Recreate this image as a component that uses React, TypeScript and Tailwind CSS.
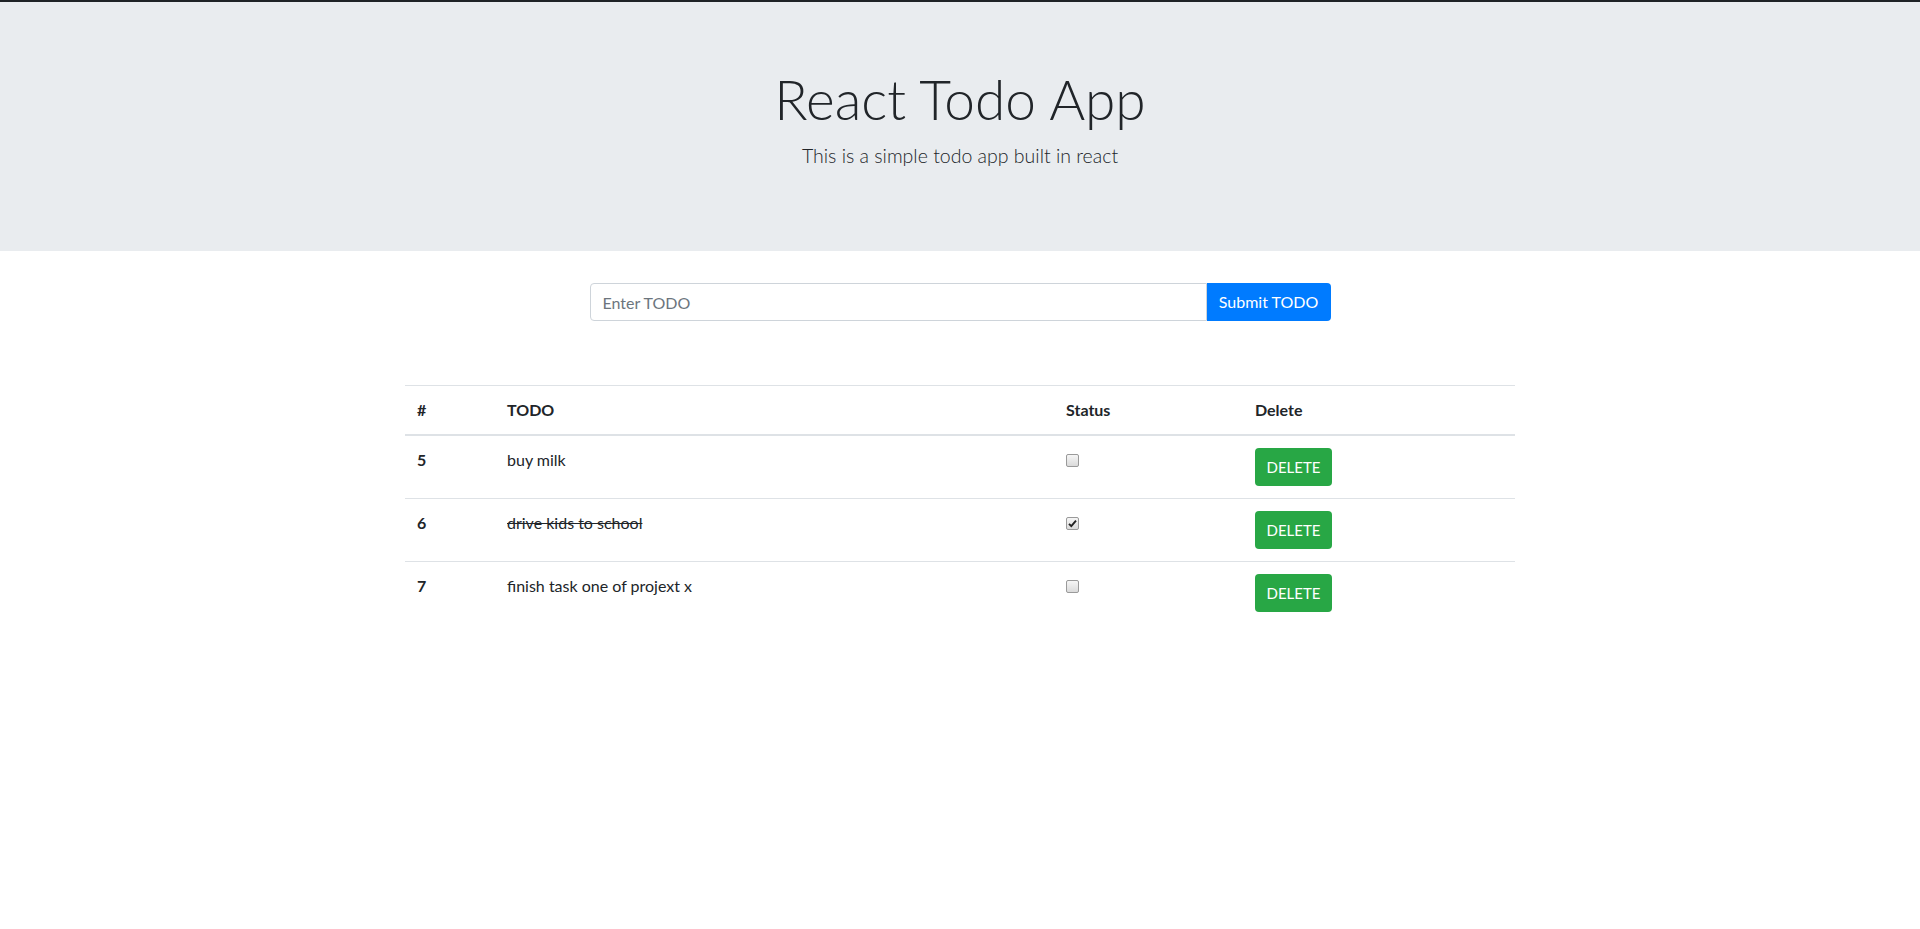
import { useState } from "react";

type Todo = {
  id: number;
  text: string;
  done: boolean;
};

const initialTodos: Todo[] = [
  { id: 5, text: "buy milk", done: false },
  { id: 6, text: "drive kids to school", done: true },
  { id: 7, text: "finish task one of projext x", done: false },
];

function StatusBox({ checked, onChange }: { checked: boolean; onChange: () => void }) {
  return (
    <span className="relative inline-block w-[13px] h-[13px] mt-[6px] align-top">
      <input
        type="checkbox"
        checked={checked}
        onChange={onChange}
        className="appearance-none block w-[13px] h-[13px] m-0 rounded-[2px] border border-[#9a9a9a] bg-gradient-to-b from-[#f6f6f6] to-[#dadada] cursor-pointer"
      />
      {checked && (
        <svg
          viewBox="0 0 13 13"
          className="pointer-events-none absolute inset-0 w-[13px] h-[13px]"
        >
          <path d="M3 6.8 L5.3 9.2 L10 3.6" fill="none" stroke="#222" strokeWidth="1.9" />
        </svg>
      )}
    </span>
  );
}

export default function App() {
  const [todos, setTodos] = useState<Todo[]>(initialTodos);
  const [draft, setDraft] = useState("");

  const addTodo = () => {
    if (!draft.trim()) return;
    const nextId = todos.length ? todos[todos.length - 1].id + 1 : 1;
    setTodos([...todos, { id: nextId, text: draft.trim(), done: false }]);
    setDraft("");
  };

  const toggle = (id: number) =>
    setTodos(todos.map((t) => (t.id === id ? { ...t, done: !t.done } : t)));

  const remove = (id: number) => setTodos(todos.filter((t) => t.id !== id));

  return (
    <div className="min-h-[929px] bg-white text-[#212529] font-['Lato','Liberation_Sans',sans-serif] text-base">
      <div className="h-[2px] bg-[#1f2326]" />

      {/* Header */}
      <div className="bg-[#e9ecef] py-16 px-8 mb-8 text-center">
        <h1 className="text-[55px] leading-[67px] font-light mb-2">React Todo App</h1>
        <p className="text-[19.5px] leading-[30px] font-light mb-4">
          This is a simple todo app built in react
        </p>
      </div>

      {/* Form */}
      <div className="flex justify-center">
        <form
          className="flex w-[741px]"
          onSubmit={(e) => {
            e.preventDefault();
            addTodo();
          }}
        >
          <input
            value={draft}
            onChange={(e) => setDraft(e.target.value)}
            placeholder="Enter TODO"
            className="flex-1 h-[38px] px-3 border border-[#ced4da] rounded-l-[4px] outline-none text-base text-[#495057] placeholder:text-[#6c757d]"
          />
          <button
            type="submit"
            className="h-[38px] w-[124px] bg-[#007bff] text-white rounded-r-[4px] text-base"
          >
            Submit TODO
          </button>
        </form>
      </div>

      {/* Table */}
      <div className="w-[1110px] mx-auto mt-16">
        <table className="w-full table-fixed border-collapse text-left">
          <thead>
            <tr className="border-t border-[#dee2e6] border-b-2">
              <th className="w-[90px] p-3 font-bold leading-6 align-bottom">#</th>
              <th className="w-[559px] p-3 font-bold leading-6 align-bottom">TODO</th>
              <th className="w-[189px] p-3 font-bold leading-6 align-bottom">Status</th>
              <th className="p-3 font-bold leading-6 align-bottom">Delete</th>
            </tr>
          </thead>
          <tbody>
            {todos.map((t) => (
              <tr key={t.id} className="border-b border-[#dee2e6] last:border-b-0">
                <th className="p-3 font-bold leading-6 align-top">{t.id}</th>
                <td className={`p-3 leading-6 align-top ${t.done ? "line-through" : ""}`}>
                  {t.text}
                </td>
                <td className="p-3 leading-6 align-top">
                  <StatusBox checked={t.done} onChange={() => toggle(t.id)} />
                </td>
                <td className="p-3 leading-6 align-top">
                  <button
                    onClick={() => remove(t.id)}
                    className="h-[38px] w-[77px] bg-[#28a745] text-white rounded-[4px] text-[15px]"
                  >
                    DELETE
                  </button>
                </td>
              </tr>
            ))}
          </tbody>
        </table>
      </div>
    </div>
  );
}
